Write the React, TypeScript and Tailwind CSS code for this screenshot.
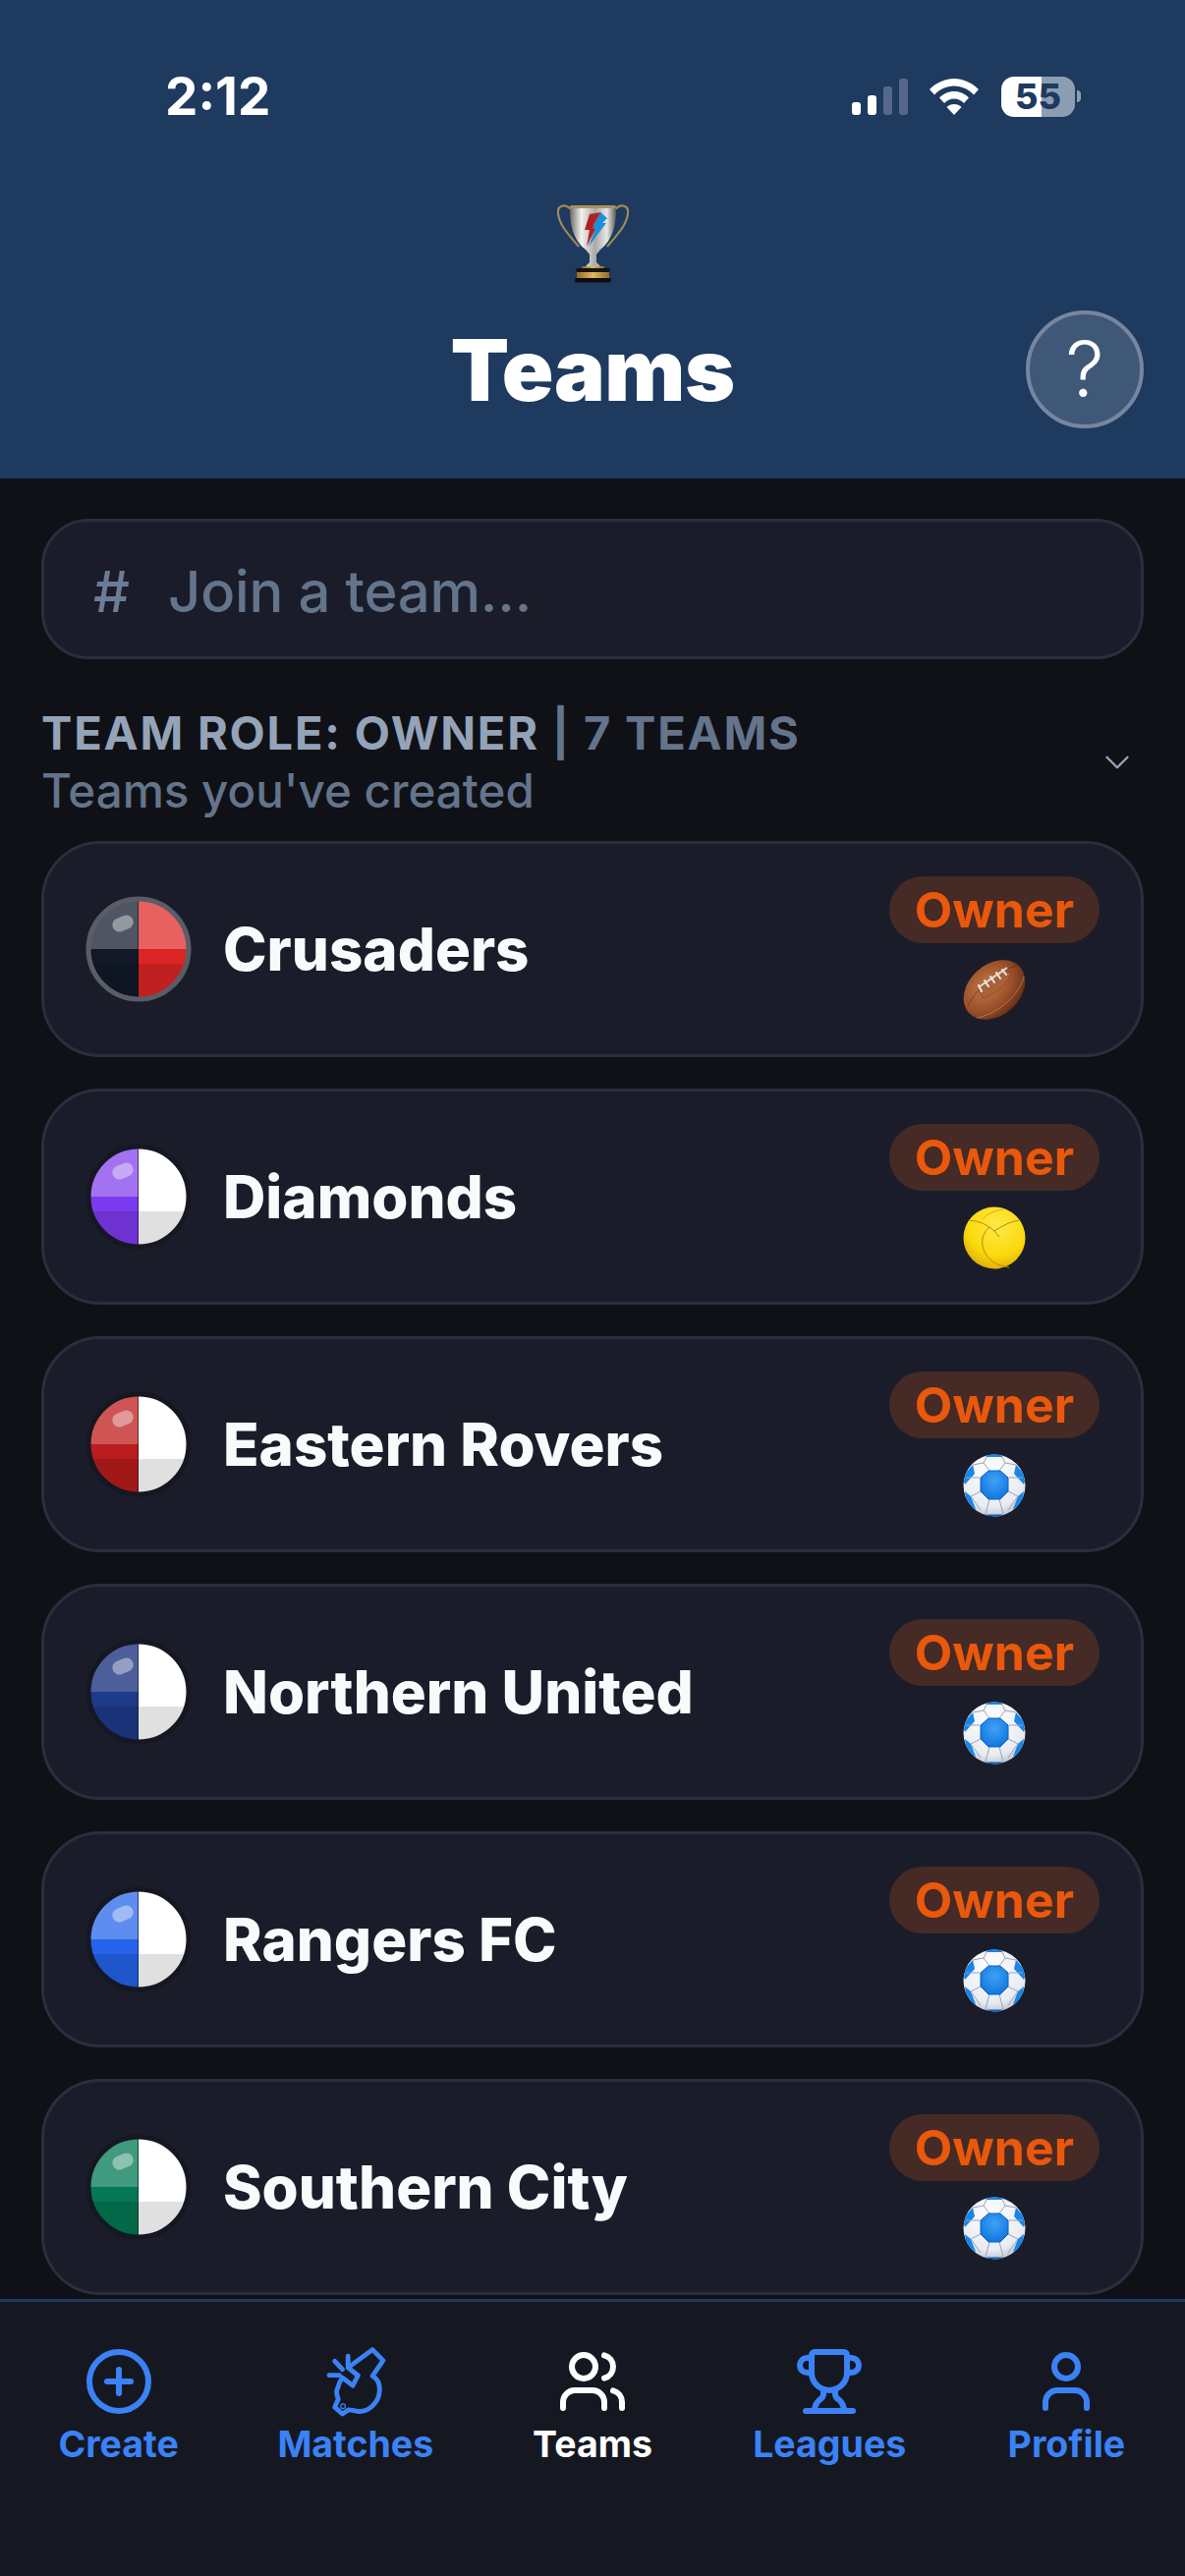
import { ChevronDown, CirclePlus, Trophy, User, Users } from 'lucide-react';
import type { ReactNode } from 'react';

interface Team {
  name: string;
  left: [string, string, string];
  right: [string, string, string];
  ring: string;
  sport: 'football' | 'netball' | 'soccer';
}

const white: [string, string, string] = ['#ffffff', '#ffffff', '#e0e0e0'];

const teams: Team[] = [
  { name: 'Crusaders', left: ['#4f5562', '#111827', '#0f1623'], right: ['#e86060', '#dc2626', '#c02020'], ring: '#5a5d66', sport: 'football' },
  { name: 'Diamonds', left: ['#a272f1', '#7c3aed', '#6d32cf'], right: white, ring: '#151823', sport: 'netball' },
  { name: 'Eastern Rovers', left: ['#cf5555', '#b91c1c', '#a11818'], right: white, ring: '#151823', sport: 'soccer' },
  { name: 'Northern United', left: ['#4d5f9a', '#1e3a8a', '#1a3278'], right: white, ring: '#151823', sport: 'soccer' },
  { name: 'Rangers FC', left: ['#5f8def', '#2563eb', '#2056cc'], right: white, ring: '#151823', sport: 'soccer' },
  { name: 'Southern City', left: ['#409a7d', '#047857', '#036848'], right: white, ring: '#151823', sport: 'soccer' },
];

function TeamBadge({ team }: { team: Team }) {
  const id = `badge-${team.name.replace(/\s/g, '')}`;
  return (
    <svg width="108" height="108" viewBox="0 0 108 108" className="shrink-0">
      <defs>
        <clipPath id={id}>
          <circle cx="54" cy="54" r="49.5" />
        </clipPath>
      </defs>
      <g clipPath={`url(#${id})`}>
        <rect x="0" y="0" width="54" height="54" fill={team.left[0]} />
        <rect x="0" y="54" width="54" height="15" fill={team.left[1]} />
        <rect x="0" y="69" width="54" height="39" fill={team.left[2]} />
        <rect x="54" y="0" width="54" height="54" fill={team.right[0]} />
        <rect x="54" y="54" width="54" height="15" fill={team.right[1]} />
        <rect x="54" y="69" width="54" height="39" fill={team.right[2]} />
        <rect x="53" y="0" width="1" height="108" fill="#0f1117" opacity="0.6" />
      </g>
      <circle cx="54" cy="54" r="51" fill="none" stroke={team.ring} strokeWidth="5" />
      <rect x="27" y="21" width="22" height="14" rx="7" fill="#fff" opacity="0.4" transform="rotate(-22 38 28)" />
    </svg>
  );
}

function FootballBall() {
  return (
    <svg width="64" height="64" viewBox="0 0 64 64">
      <defs>
        <radialGradient id="leather" cx="45%" cy="35%" r="70%">
          <stop offset="0" stopColor="#c4784c" />
          <stop offset="0.6" stopColor="#9a5028" />
          <stop offset="1" stopColor="#5c2a12" />
        </radialGradient>
      </defs>
      <ellipse cx="32" cy="31.5" rx="35" ry="26" transform="rotate(-42 32 31.5)" fill="url(#leather)" />
      <path d="M5 48 C14 30 34 10 60 6" fill="none" stroke="#4a200c" strokeWidth="0.8" opacity="0.6" />
      <path d="M62 18 C58 36 36 56 14 60" fill="none" stroke="#d49a78" strokeWidth="0.8" opacity="0.7" />
      <path d="M15 32 L40 11 L49 14 C47 24 34 36 21 40 Z" fill="#a8623a" stroke="#7a4020" strokeWidth="0.6" />
      <path d="M16 29 L45 9" stroke="#dcdcdc" strokeWidth="2" fill="none" />
      <path d="M16 27 L19 33 M22 22 L26 28 M28 18 L32 24 M34 14 L38 20 M40 11 L44 16" stroke="#e8e8e8" strokeWidth="2" strokeLinecap="round" />
    </svg>
  );
}

function NetballBall() {
  return (
    <svg width="64" height="64" viewBox="0 0 64 64">
      <defs>
        <radialGradient id="yellow" cx="55%" cy="30%" r="75%">
          <stop offset="0" stopColor="#ffe94a" />
          <stop offset="0.65" stopColor="#fbd90c" />
          <stop offset="1" stopColor="#d8a808" />
        </radialGradient>
      </defs>
      <circle cx="32" cy="32" r="31.5" fill="url(#yellow)" />
      <g fill="none" stroke="#b8860b" strokeWidth="1">
        <path d="M7 14.5 C16 14 25 19 32 25" />
        <path d="M57 14.5 C48 15 40 20 32 25" />
        <path d="M32 25 L37 31" />
        <path d="M28 21 C18 26 14 46 33 58 C37 60 42 61 47 62" />
        <path d="M20 13 C24 8 32 4 41 3" opacity="0.55" />
      </g>
    </svg>
  );
}

function SoccerBall() {
  const id = `soccer-${Math.random().toString(36).slice(2)}`;
  return (
    <svg width="64" height="64" viewBox="0 0 64 64">
      <defs>
        <radialGradient id={`${id}-w`} cx="45%" cy="30%" r="80%">
          <stop offset="0" stopColor="#ffffff" />
          <stop offset="0.7" stopColor="#e8ebf2" />
          <stop offset="1" stopColor="#a9b0c0" />
        </radialGradient>
        <radialGradient id={`${id}-b`} cx="50%" cy="35%" r="70%">
          <stop offset="0" stopColor="#3fa2f6" />
          <stop offset="1" stopColor="#0e74dc" />
        </radialGradient>
        <clipPath id={`${id}-c`}>
          <circle cx="32" cy="32" r="31.5" />
        </clipPath>
      </defs>
      <circle cx="32" cy="32" r="31.5" fill={`url(#${id}-w)`} />
      <g clipPath={`url(#${id}-c)`}>
        <g fill="#1785ea">
          <path d="M22 0 H42 L40 3 H24 Z" />
          <path d="M1 28 L2 20 L10 11 L12 20 L2 31 Z" />
          <path d="M63 28 L62 20 L54 11 L52 20 L62 31 Z" />
          <path d="M2 38 L8 43 L13 56 L4 52 Z" />
          <path d="M62 38 L56 43 L51 56 L60 52 Z" />
          <path d="M24 61.5 H40 L42 64 H22 Z" fill="#0b5fc0" />
        </g>
        <g stroke="#9aa3b4" strokeWidth="1" fill="none">
          <path d="M24 3 L21 9 L10 11 M40 3 L43 9 L54 11" />
          <path d="M21 9 L27 17 M43 9 L37 17" />
          <path d="M3 24 L17 24 M61 24 L47 24" />
          <path d="M18 38 L8 43 M46 38 L56 43" />
          <path d="M27 46 L23 61 M37 46 L41 61" />
          <path d="M8 43 L18 57 M56 43 L46 57" />
        </g>
      </g>
      <path d="M26 17 H38 L46 24 V38 L38 46 H26 L18 38 V24 Z" fill={`url(#${id}-b)`} stroke="#0a62c2" strokeWidth="1" strokeLinejoin="round" />
    </svg>
  );
}

function SportIcon({ sport }: { sport: Team['sport'] }) {
  if (sport === 'football') return <FootballBall />;
  if (sport === 'netball') return <NetballBall />;
  return <SoccerBall />;
}

function TeamCard({ team }: { team: Team }) {
  return (
    <div className="flex h-[220px] items-center justify-between rounded-[60px] border-[3px] border-[#2a2e3d] bg-[#1a1d29] pl-[42px] pr-[42px]">
      <div className="flex items-center gap-[32px]">
        <TeamBadge team={team} />
        <span className="text-[60px] font-extrabold leading-none text-[#f8fafc]">{team.name}</span>
      </div>
      <div className="flex flex-col items-center gap-[16px]">
        <span className="flex h-[68px] w-[214px] items-center justify-center rounded-full bg-[#452a25] text-[50px] font-bold leading-none text-[#ea580c]">
          Owner
        </span>
        <SportIcon sport={team.sport} />
      </div>
    </div>
  );
}

function WhistleIcon() {
  return (
    <svg width="72" height="72" viewBox="0 0 24 24" fill="none" stroke="currentColor" strokeWidth="1.6" strokeLinecap="round" strokeLinejoin="round">
      <path d="M17.7 1.2 L21.3 4.9 L17.7 10.1 C19.6 11.2 20.2 13.2 20.1 15.1 C19.9 19.4 16 22.6 12.6 22.1 C11.4 22 10.4 21.6 9.6 21.6 L7.5 23 L4.9 20.7 L6.1 17.9 C5.5 16.6 5.4 15 6 14 C6.2 12.8 6.8 11.6 7.5 10.7 L11 13.4 L12.8 10 L9.4 7.3 Z" />
      <path d="M9.4 3.4 V6.7 M4.9 5.1 L7.5 7.9 M3 9.9 H6.5" />
      <circle cx="7.7" cy="20.4" r="0.2" />
    </svg>
  );
}

function NavItem({ icon, label, active }: { icon: ReactNode; label: string; active?: boolean }) {
  return (
    <div className={`flex flex-col items-center ${active ? 'text-white' : 'text-[#3b82f6]'}`}>
      {icon}
      <span className="mt-[4px] text-[37.5px] font-bold leading-[48px]">{label}</span>
    </div>
  );
}

function StatusBar() {
  return (
    <div className="flex h-[42px] items-center justify-between pl-[168px] pr-[106px] pt-0">
      <span className="text-[53px] font-bold leading-none text-white">2:12</span>
      <div className="flex items-center">
        <div className="flex h-[37px] items-end gap-[7px]">
          <div className="h-[13px] w-[9px] rounded-[3px] bg-white" />
          <div className="h-[20px] w-[9px] rounded-[3px] bg-white" />
          <div className="h-[29px] w-[9px] rounded-[3px] bg-[#54698a]" />
          <div className="h-[37px] w-[9px] rounded-[3px] bg-[#54698a]" />
        </div>
        <svg width="50" height="37" viewBox="0 0 50 37" className="ml-[22px]" fill="white">
          <path d="M25 0 C34 0 43 4 50 11 L45 16.5 C40 11 33 7.5 25 7.5 C17 7.5 10 11 5 16.5 L0 11 C7 4 16 0 25 0 Z" />
          <path d="M25 13 C31 13 36 15.5 40 19.5 L35 25 C32 22 29 20.5 25 20.5 C21 20.5 18 22 15 25 L10 19.5 C14 15.5 19 13 25 13 Z" />
          <path d="M25 26 C28 26 30.5 27 32.5 29 L25 37 L17.5 29 C19.5 27 22 26 25 26 Z" />
        </svg>
        <div className="ml-[23px] flex items-center gap-[2px]">
          <div className="flex h-[41px] w-[75px] items-center justify-center rounded-[13px] bg-[linear-gradient(to_right,#ffffff_55%,#8d9db2_55%)] text-[36px] font-extrabold leading-none text-[#1e3a5f]">
            55
          </div>
          <div className="h-[12px] w-[4px] rounded-r-full bg-[#8d9db2]" />
        </div>
      </div>
    </div>
  );
}

function CupLogo() {
  return (
    <svg width="73" height="81" viewBox="0 0 73 81">
      <defs>
        <linearGradient id="silver" x1="0" x2="1" y1="0" y2="0">
          <stop offset="0" stopColor="#6f6a60" />
          <stop offset="0.25" stopColor="#f2f2f0" />
          <stop offset="0.55" stopColor="#a8a8a6" />
          <stop offset="0.8" stopColor="#e8e8e6" />
          <stop offset="1" stopColor="#5f5c54" />
        </linearGradient>
        <linearGradient id="gold" x1="0" x2="1" y1="0" y2="0">
          <stop offset="0" stopColor="#8f6a2c" />
          <stop offset="0.5" stopColor="#e2b860" />
          <stop offset="1" stopColor="#8f6a2c" />
        </linearGradient>
      </defs>
      <g fill="none" stroke="#a08a58" strokeWidth="2.2">
        <path d="M14 6 C8 0 0 2 1 10 C2 22 12 32 22 44" />
        <path d="M59 6 C65 0 73 2 72 10 C71 22 61 32 51 44" />
      </g>
      <path d="M13 3 H60 C60 20 58 36 44 47 L40 52 V60 L45 65 H28 L33 60 V52 L29 47 C15 36 13 20 13 3 Z" fill="url(#silver)" />
      <rect x="13" y="2" width="47" height="3" rx="1.5" fill="#a8925c" />
      <path d="M33 11 L45 9 L37 22 L41 22 L30 44 L33 27 L28 27 Z" fill="#b3201f" />
      <path d="M44 9 L51 15 L46 20 L50 20 L32 44 L39 26 L36 25 Z" fill="#1f8fd8" />
      <rect x="25" y="64" width="23" height="3" rx="1" fill="url(#gold)" />
      <rect x="19" y="66" width="35" height="4" rx="2" fill="#17130e" />
      <rect x="20" y="70" width="33" height="6" fill="url(#gold)" />
      <rect x="18" y="76" width="37" height="4.5" rx="2" fill="#0e0c09" />
    </svg>
  );
}

export default function App() {
  return (
    <div className="flex h-[2622px] w-[1206px] flex-col overflow-hidden bg-[#0f1117] [font-family:Inter,sans-serif]">
      {/* Header */}
      <header className="h-[487px] shrink-0 bg-[#1e3a5f] pt-[77px]">
        <StatusBar />
        <div className="mt-[88px] flex justify-center">
          <CupLogo />
        </div>
        <div className="mt-[28px] grid grid-cols-[1fr_auto_1fr] items-center px-[42px]">
          <div />
          <h1 className="text-[87px] font-black leading-none tracking-[-0.5px] text-white">Teams</h1>
          <button className="flex h-[120px] w-[120px] items-center justify-center justify-self-end rounded-full border-[4px] border-[#76869f] bg-[#3f5878] text-[78px] font-[350] leading-none text-white">
            ?
          </button>
        </div>
      </header>

      {/* Content */}
      <main className="min-h-0 flex-1 overflow-hidden px-[42px] pt-[41px]">
        <div className="flex h-[143px] items-center rounded-[48px] border-[3px] border-[#2a2e3d] bg-[#1a1d29] pl-[50px] pt-[4px]">
          <span className="text-[58px] font-medium leading-none text-[#6b7c95]">#</span>
          <span className="ml-[39px] text-[58px] font-medium leading-none tracking-[-0.2px] text-[#64748b]">Join a team...</span>
        </div>

        <div className="mt-[46px] flex items-center justify-between pr-[6px]">
          <div>
            <div className="text-[47px] font-bold leading-[58px] tracking-[1.8px] text-[#94a3b8]">
              TEAM ROLE: OWNER <span className="text-[#64748b]">| 7 TEAMS</span>
            </div>
            <div className="text-[47.5px] font-medium leading-[60px] text-[#64748b]">Teams you've created</div>
          </div>
          <ChevronDown size={42} strokeWidth={1.4} className="text-[#94a3b8]" />
        </div>

        <div className="mt-[21px] flex flex-col gap-[32px]">
          {teams.map((team) => (
            <TeamCard key={team.name} team={team} />
          ))}
        </div>
      </main>

      {/* Bottom nav */}
      <nav className="grid h-[282px] shrink-0 grid-cols-5 border-t-[3px] border-[#1e3a5f] bg-[#151821] pt-[45px]">
        <NavItem icon={<CirclePlus size={72} strokeWidth={2} />} label="Create" />
        <NavItem icon={<WhistleIcon />} label="Matches" />
        <NavItem icon={<Users size={72} strokeWidth={2} />} label="Teams" active />
        <NavItem icon={<Trophy size={72} strokeWidth={2} />} label="Leagues" />
        <NavItem icon={<User size={72} strokeWidth={2} />} label="Profile" />
      </nav>
    </div>
  );
}
